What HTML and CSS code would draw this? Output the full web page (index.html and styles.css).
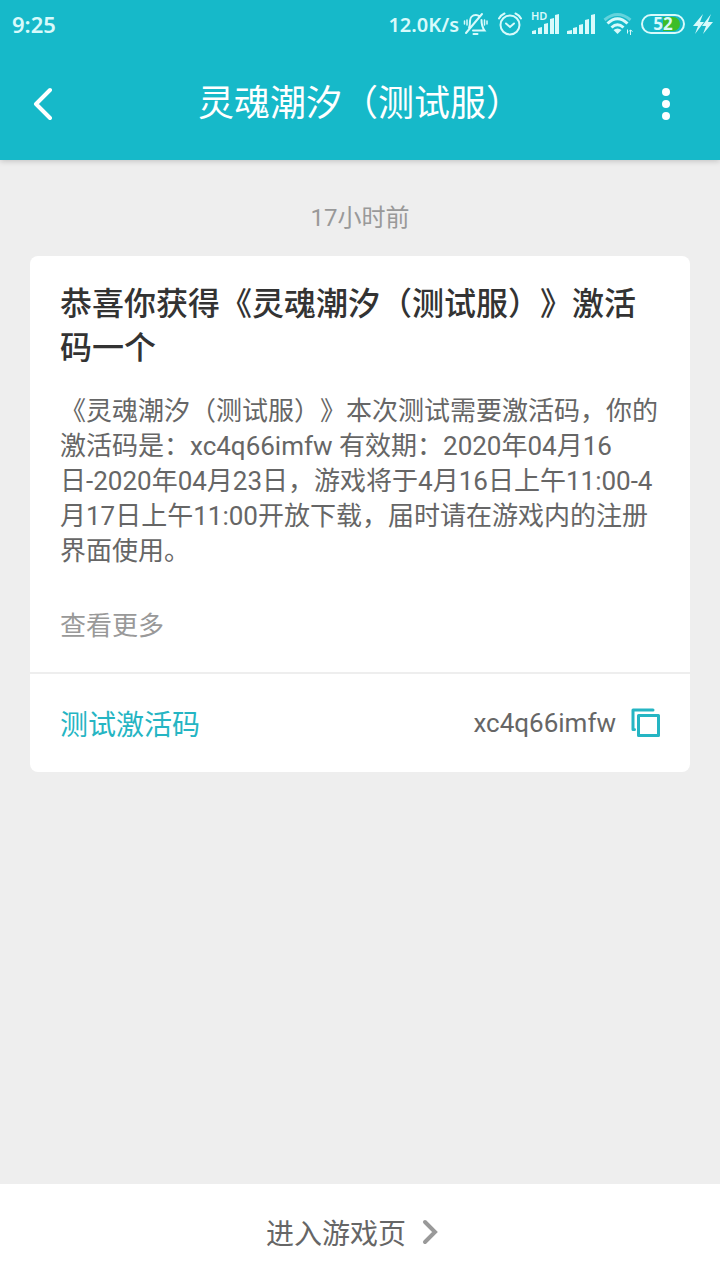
FILE: index.html
```html
<!DOCTYPE html>
<html lang="zh-CN">
<head>
    <meta charset="UTF-8">
    <meta name="viewport" content="width=device-width, initial-scale=1.0">
    <title>灵魂潮汐（测试服）</title>
    <link rel="stylesheet" href="styles.css">
</head>
<body>
    <header class="header">
        <div class="status-bar">
            <span class="clock">9:25</span>
            <div class="status-icons">
                <span class="speed">12.0K/s</span>
                <!-- mute -->
                <svg class="icon" width="26" height="24" viewBox="0 0 26 24" fill="none" stroke="#d8fafb" stroke-width="2" stroke-linecap="round">
                    <path d="M6 16c1-2 1-4 1-7 0-3 2-6 6-6 1.500 0 2.500 .5 3.500 1.500M18.500 8c0 4 .5 7 3 10.500H10M10.500 22h4M19 2L3 21"/>
                    <path d="M4 8v5M1.500 9v3M21.500 8v5M24 9v3" stroke-width="1.500"/>
                </svg>
                <!-- alarm -->
                <svg class="icon" width="26" height="24" viewBox="0 0 26 24" fill="none" stroke="#d8fafb" stroke-width="2" stroke-linecap="round">
                    <circle cx="13" cy="13" r="9.500"/>
                    <path d="M9 11.500l4 3.500 4-3.500M2 6.500Q4 3 7.500 1.500M24 6.500Q22 3 18.500 1.500"/>
                </svg>
                <span class="signal">
                    <span class="hd">HD</span>
                    <svg width="28" height="20" viewBox="0 0 28 20" fill="#d8fafb">
                        <path d="M1 20v-3l4-1v4zM7 20v-6l4-1v7zM13 20V10l4-1v11zM19 20V5l4-1v16zM24 20V1l4-1v20z"/>
                    </svg>
                </span>
                <svg class="icon" width="28" height="20" viewBox="0 0 28 20" fill="#d8fafb">
                    <path d="M0 20v-3l5-1v4zM6 20v-6l4-1v7zM12 20v-9l4-1v10zM18 20V6l4-1v15zM24 20V1l4-1v20z"/>
                </svg>
                <!-- wifi -->
                <svg class="icon" width="30" height="24" viewBox="0 0 30 24" fill="none" stroke="#d8fafb" stroke-width="3">
                    <path d="M1.500 8Q14.500-3 27.500 8" opacity=".4"/>
                    <path d="M4.500 11.500Q14.500 2 24.500 11.500M8.500 15.500Q14.500 10 20.500 15.500"/>
                    <path d="M10.500 18Q14.500 15 18.500 18L14.500 22z" fill="#d8fafb" stroke="none"/>
                    <path d="M24.500 17.500v4M27.500 18v5M26 19.500l1.500-1.500 2 1.500" stroke-width="1"/>
                </svg>
                <!-- battery -->
                <svg class="icon" width="44" height="22" viewBox="0 0 44 22">
                    <path d="M22 4h10a7 7 0 0 1 0 14H22z" fill="#3ebd28"/>
                    <rect x="1" y="2" width="42" height="18" rx="9" fill="none" stroke="#d8fafb" stroke-width="2"/>
                    <text class="battery-text" x="22" y="17" text-anchor="middle">52</text>
                </svg>
                <!-- charging -->
                <svg class="icon" width="20" height="20" viewBox="0 0 20 20" fill="#d8fafb">
                    <path d="M10 0L0 12h5L2 20l9-12H7zM18 0L9 12h4l-3 8 10-12h-5z"/>
                </svg>
            </div>
        </div>
        <nav class="title-bar">
            <button class="icon-btn back" type="button" aria-label="返回">
                <svg width="22" height="34" viewBox="0 0 22 34" fill="none" stroke="#fff" stroke-width="4" stroke-linecap="round" stroke-linejoin="round">
                    <path d="M20 3L6 17l14 14"/>
                </svg>
            </button>
            <h1 class="title">灵魂潮汐（测试服）</h1>
            <button class="icon-btn more" type="button" aria-label="更多">
                <svg width="8" height="34" viewBox="0 0 8 34" fill="#fff">
                    <circle cx="4" cy="5" r="4"/>
                    <circle cx="4" cy="17" r="4"/>
                    <circle cx="4" cy="29" r="4"/>
                </svg>
            </button>
        </nav>
    </header>

    <main class="content">
        <p class="time">17小时前</p>
        <article class="card">
            <div class="card-body">
                <h2 class="card-title">恭喜你获得《灵魂潮汐（测试服）》激活码一个</h2>
                <p class="card-text">《灵魂潮汐（测试服）》本次测试需要激活码，你的激活码是：xc4q66imfw 有效期：2020年04月16日-2020年04月23日，游戏将于4月16日上午11:00-4月17日上午11:00开放下载，届时请在游戏内的注册界面使用。</p>
                <a class="more-link" href="#">查看更多</a>
            </div>
            <div class="code-row">
                <span class="code-label">测试激活码</span>
                <span class="code">xc4q66imfw</span>
                <button class="copy" type="button" aria-label="复制">
                    <svg width="30" height="30" viewBox="0 0 30 30" fill="none" stroke="#25b5c3" stroke-width="3" stroke-linejoin="round" stroke-linecap="round">
                        <rect x="7.500" y="7.500" width="20" height="20"/>
                        <path d="M22 2H2V21.500H3.500"/>
                    </svg>
                </button>
            </div>
        </article>
    </main>

    <footer class="footer">
        <a class="enter" href="#">进入游戏页
            <svg width="16" height="26" viewBox="0 0 16 26" fill="none" stroke="#999" stroke-width="4" stroke-linecap="round">
                <path d="M3 3l10 10L3 23"/>
            </svg>
        </a>
    </footer>
</body>
</html>
```

FILE: styles.css
```css
* {
    box-sizing: border-box;
}
body {
    margin: 0;
    min-height: 100vh;
    display: flex;
    flex-direction: column;
    background-color: #eee;
    color: #666;
    font-family: Roboto, "Noto Sans CJK SC", sans-serif;
    text-spacing-trim: space-all;
}
h1, h2, p {
    margin: 0;
}
svg {
    display: block;
}
button {
    border: 0;
    padding: 0;
    background: none;
    cursor: pointer;
}
a {
    text-decoration: none;
}

/* header */
.header {
    background-color: #16b9c9;
    box-shadow: 0 1px 6px rgba(0, 0, 0, 0.2);
}
.status-bar {
    height: 48px;
    padding: 0 7px 0 12px;
    display: flex;
    align-items: center;
    justify-content: space-between;
    color: #d8fafb;
    font-family: "Noto Sans", sans-serif;
    font-weight: 600;
}
.clock {
    font-size: 22px;
}
.status-icons {
    display: flex;
    align-items: center;
    gap: 8px;
}
.speed {
    font-size: 20px;
    margin-right: -4px;
}
.signal {
    position: relative;
}
.hd {
    position: absolute;
    left: 0;
    top: -4px;
    font-size: 11px;
    line-height: 12px;
}
.battery-text {
    font-size: 17px;
    font-weight: 700;
    fill: #d8fafb;
}
.title-bar {
    height: 112px;
    padding: 0 30px;
    display: flex;
    align-items: center;
    justify-content: space-between;
}
.icon-btn {
    width: 40px;
    display: flex;
}
.more {
    justify-content: flex-end;
    padding-right: 20px;
}
.title {
    color: #fff;
    font-size: 36px;
    font-weight: 400;
    line-height: 48px;
}

/* message */
.content {
    flex: 1;
    padding: 42px 30px;
}
.time {
    margin-bottom: 22px;
    color: #999;
    font-size: 24px;
    line-height: 32px;
    text-align: center;
}
.card {
    background-color: #fff;
    border-radius: 8px;
}
.card-body {
    padding: 26px 30px 28px;
    border-bottom: 2px solid #eee;
}
.card-title {
    color: #333;
    font-size: 32px;
    font-weight: 500;
    line-height: 44px;
}
.card-text {
    margin: 24px 0 40px;
    font-size: 26px;
    line-height: 35px;
}
.more-link {
    display: block;
    color: #999;
    font-size: 26px;
    line-height: 35px;
}
.code-row {
    height: 98px;
    padding: 0 29px 0 30px;
    display: flex;
    align-items: center;
    gap: 15px;
}
.code-label {
    margin-right: auto;
    color: #25b5c3;
    font-size: 28px;
}
.code {
    font-size: 26px;
}

/* bottom bar */
.footer {
    height: 96px;
    padding-right: 16px;
    background-color: #fff;
    display: flex;
    align-items: center;
    justify-content: center;
}
.enter {
    display: flex;
    align-items: center;
    gap: 16px;
    color: #666;
    font-size: 28px;
}
```
